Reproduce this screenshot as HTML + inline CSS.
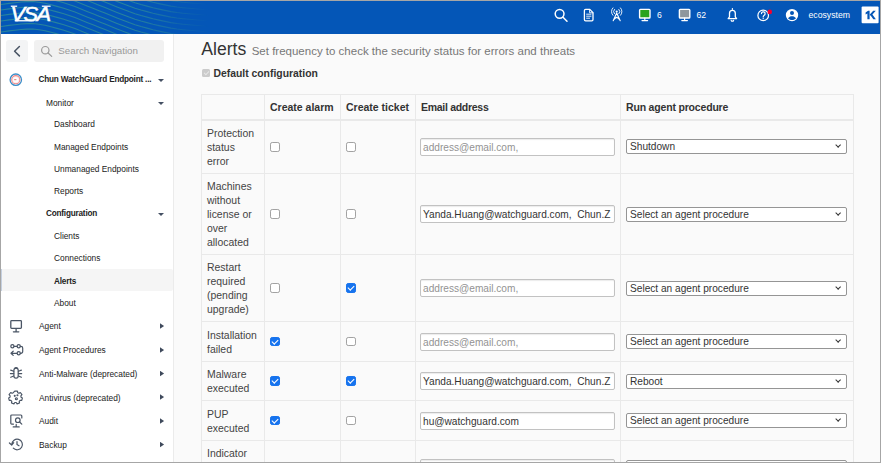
<!DOCTYPE html>
<html>
<head>
<meta charset="utf-8">
<title>VSA - Alerts</title>
<style>
*{box-sizing:border-box;}
html,body{margin:0;padding:0;}
body{width:881px;height:464px;overflow:hidden;position:relative;background:#fafafa;font-family:"Liberation Sans",sans-serif;color:#333;}
#frame{position:absolute;left:0;top:0;width:881px;height:463px;border:1px solid #a6a6a6;z-index:50;pointer-events:none;}
#botw{position:absolute;left:0;top:463px;width:881px;height:1px;background:#fff;z-index:51;}
#hdr{position:absolute;left:1px;top:1px;width:879px;height:33px;background:#0456b7;overflow:hidden;}
#hdr svg.wave{position:absolute;left:0;top:0;}

.hi{position:absolute;top:0;}
.htxt{position:absolute;color:#fff;font-size:8.7px;line-height:10px;top:9px;}
#side{position:absolute;left:1px;top:34px;width:173px;height:429px;background:#fff;border-right:1px solid #ebebeb;}
#back{position:absolute;left:5px;top:6px;width:22px;height:22px;background:#f3f4f5;border-radius:3px;}
#search{position:absolute;left:33px;top:6px;width:130px;height:22px;background:#f1f1f1;border-radius:3px;}
#search span{position:absolute;left:24.3px;top:4.8px;font-size:9.75px;line-height:12px;color:#999;}
.nav{position:absolute;font-size:8.35px;line-height:10px;color:#222;white-space:nowrap;margin-top:0.5px;}
.nav.b{font-weight:700;font-size:8.2px;letter-spacing:-0.2px;}
.caret{position:absolute;width:0;height:0;border-left:3px solid transparent;border-right:3px solid transparent;border-top:3.4px solid #445063;margin-left:0.4px;margin-top:0.6px;}
.rarr{position:absolute;width:4.5px;height:6px;margin-top:-0.2px;background:#3f4a5c;clip-path:polygon(0 0,100% 50%,0 100%);}
#sel{position:absolute;left:0;top:235.200px;width:171.500px;height:22.300px;background:#f5f5f5;border-left:1.500px solid #c5d0e0;border-radius:0 2px 2px 0;}
#main{position:absolute;left:174px;top:34px;width:706px;height:429px;}
h1{position:absolute;left:27.3px;top:3.2px;margin:0;font-size:17.6px;font-weight:400;color:#333;line-height:24px;white-space:nowrap;}
h1 small{font-size:11.5px;color:#777;font-weight:400;margin-left:0.5px;}
#defcfg{position:absolute;left:39.4px;top:34px;font-size:10.4px;font-weight:700;color:#333;line-height:12px;}
#defcb{position:absolute;left:28.3px;top:34.8px;width:7.8px;height:7.8px;background:#cbcbcb;border-radius:1.5px;}
#defcb:after{content:"";position:absolute;left:2.6px;top:0.8px;width:2px;height:4.2px;border:solid #e8e8e8;border-width:0 1.2px 1.2px 0;transform:rotate(45deg);}
table{position:absolute;left:27px;top:60px;border-collapse:collapse;table-layout:fixed;width:652px;font-size:10.6px;line-height:14px;}
td,th{border:1px solid #e9e9e9;padding:0 5px;text-align:left;vertical-align:middle;color:#444;}
th{font-weight:700;color:#333;height:25px;border-bottom:2px solid #e9e9e9;font-size:10.5px;}
td:first-child{font-size:10.45px;position:relative;top:1.3px;}
.cb{display:block;width:9.5px;height:9.5px;border:1.2px solid #a2a2a2;border-radius:2.2px;background:#fff;margin-left:0.4px;}
.cb.on{background:#1673ee;border-color:#1673ee;position:relative;}
.cb.on:after{content:"";position:absolute;left:2.1px;top:0px;width:2.6px;height:5.2px;border:solid #fff;border-width:0 1.7px 1.7px 0;transform:rotate(45deg);}
.inp{display:block;width:195px;height:18px;margin-left:-1px;border:1px solid #c2c2c2;border-radius:2px;background:#fff;font-size:10.15px;line-height:17.5px;padding:0 2px;color:#333;white-space:nowrap;overflow:hidden;box-shadow:inset 0 1px 1px rgba(0,0,0,.08);}
.inp.ph{color:#939393;}
.sel{display:block;position:relative;width:220.5px;height:15px;border:1px solid #959595;border-radius:2px;background:#fff;font-size:10.15px;line-height:14.2px;padding:0 3px;color:#333;white-space:nowrap;overflow:hidden;}
.sel:after{content:"";position:absolute;right:5px;top:3.2px;width:3.3px;height:3.3px;border:solid #333;border-width:0 1.3px 1.3px 0;transform:rotate(45deg);}
</style>
</head>
<body>
<div id="hdr">
<svg class="wave" width="260" height="33" viewBox="0 0 260 33"><defs><linearGradient id="wf" x1="0" x2="1" y1="0" y2="0"><stop offset="0" stop-color="#fff" stop-opacity="1"/><stop offset="0.5" stop-color="#fff" stop-opacity="0.95"/><stop offset="0.8" stop-color="#fff" stop-opacity="0"/></linearGradient><mask id="wm"><rect x="0" y="0" width="260" height="33" fill="url(#wf)"/></mask></defs><g mask="url(#wm)" fill="none" stroke="#2f8c98" stroke-width="1.1" stroke-linejoin="round" opacity="0.85"><path d="M164,-7.1 L170,-5.9 L176,-5.0 L182,-4.3 L188,-3.7 L194,-3.2 L200,-2.7 L206,-2.3 L212,-2.1 L218,-1.9 L224,-1.8 L230,-1.7 L236,-1.7"/><path d="M140,-7.5 L146,-5.9 L152,-4.3 L158,-2.9 L164,-1.6 L170,-0.4 L176,0.5 L182,1.2 L188,1.8 L194,2.3 L200,2.8 L206,3.2 L212,3.4 L218,3.6 L224,3.7 L230,3.8 L236,3.8"/><path d="M128,-5.9 L134,-3.8 L140,-2.0 L146,-0.4 L152,1.2 L158,2.6 L164,3.9 L170,5.1 L176,6.0 L182,6.7 L188,7.3 L194,7.8 L200,8.3 L206,8.7 L212,8.9 L218,9.1 L224,9.2 L230,9.3 L236,9.3"/><path d="M110,-7.6 L116,-5.1 L122,-2.7 L128,-0.4 L134,1.7 L140,3.5 L146,5.1 L152,6.7 L158,8.1 L164,9.4 L170,10.6 L176,11.5 L182,12.2 L188,12.8 L194,13.3 L200,13.8 L206,14.2 L212,14.4 L218,14.6 L224,14.7 L230,14.8 L236,14.8"/><path d="M98,-6.8 L104,-4.5 L110,-2.1 L116,0.4 L122,2.8 L128,5.1 L134,7.2 L140,9.0 L146,10.6 L152,12.2 L158,13.6 L164,14.9 L170,16.1 L176,17.0 L182,17.7 L188,18.3 L194,18.8 L200,19.3 L206,19.7 L212,19.9 L218,20.1 L224,20.2 L230,20.3 L236,20.3"/><path d="M86,-6.1 L92,-3.7 L98,-1.3 L104,1.0 L110,3.4 L116,5.9 L122,8.3 L128,10.6 L134,12.7 L140,14.5 L146,16.1 L152,17.7 L158,19.1 L164,20.4 L170,21.6 L176,22.5 L182,23.2 L188,23.8 L194,24.3 L200,24.8 L206,25.2 L212,25.4 L218,25.6 L224,25.7 L230,25.8 L236,25.8"/><path d="M68,-7.6 L74,-5.4 L80,-3.1 L86,-0.6 L92,1.8 L98,4.2 L104,6.5 L110,8.9 L116,11.4 L122,13.8 L128,16.1 L134,18.2 L140,20.0 L146,21.6 L152,23.2 L158,24.6 L164,25.9 L170,27.1 L176,28.0 L182,28.7 L188,29.3 L194,29.8 L200,30.3 L206,30.7 L212,30.9 L218,31.1 L224,31.2 L230,31.3 L236,31.3"/><path d="M-4,-6.9 L2,-7.8 L50,-7.2 L56,-5.6 L62,-4.0 L68,-2.1 L74,0.1 L80,2.4 L86,4.9 L92,7.3 L98,9.7 L104,12.0 L110,14.4 L116,16.9 L122,19.3 L128,21.6 L134,23.7 L140,25.5 L146,27.1 L152,28.7 L158,30.1 L164,31.4 L170,32.6 L176,33.5 L182,34.2 L188,34.8 L194,35.3 L200,35.8 L206,36.2 L212,36.4 L218,36.6 L224,36.7 L230,36.8 L236,36.8"/><path d="M-4,-1.4 L2,-2.3 L8,-3.1 L14,-3.8 L20,-4.5 L26,-4.9 L32,-5.0 L38,-4.3 L44,-3.2 L50,-1.7 L56,-0.1 L62,1.5 L68,3.4 L74,5.6 L80,7.9 L86,10.4 L92,12.8 L98,15.2 L104,17.5 L110,19.9 L116,22.4 L122,24.8 L128,27.1 L134,29.2 L140,31.0 L146,32.6 L152,34.2 L158,35.6 L164,36.9 L170,38.1 L176,39.0 L182,39.7 L188,40.3 L194,40.8 L200,41.3 L206,41.7 L212,41.9"/><path d="M-4,4.1 L2,3.2 L8,2.4 L14,1.7 L20,1.0 L26,0.6 L32,0.5 L38,1.2 L44,2.3 L50,3.8 L56,5.4 L62,7.0 L68,8.9 L74,11.1 L80,13.4 L86,15.9 L92,18.3 L98,20.7 L104,23.0 L110,25.4 L116,27.9 L122,30.3 L128,32.6 L134,34.7 L140,36.5 L146,38.1 L152,39.7 L158,41.1"/><path d="M-4,9.6 L2,8.7 L8,7.9 L14,7.2 L20,6.5 L26,6.1 L32,6.0 L38,6.7 L44,7.8 L50,9.3 L56,10.9 L62,12.5 L68,14.4 L74,16.6 L80,18.9 L86,21.4 L92,23.8 L98,26.2 L104,28.5 L110,30.9 L116,33.4 L122,35.8 L128,38.1 L134,40.2"/><path d="M-4,15.1 L2,14.2 L8,13.4 L14,12.7 L20,12.0 L26,11.6 L32,11.5 L38,12.2 L44,13.3 L50,14.8 L56,16.4 L62,18.0 L68,19.9 L74,22.1 L80,24.4 L86,26.9 L92,29.3 L98,31.7 L104,34.0 L110,36.4 L116,38.9 L122,41.3"/><path d="M-4,20.6 L2,19.7 L8,18.9 L14,18.2 L20,17.5 L26,17.1 L32,17.0 L38,17.7 L44,18.8 L50,20.3 L56,21.9 L62,23.5 L68,25.4 L74,27.6 L80,29.9 L86,32.4 L92,34.8 L98,37.2 L104,39.5 L110,41.9"/><path d="M-4,26.1 L2,25.2 L8,24.4 L14,23.7 L20,23.0 L26,22.6 L32,22.5 L38,23.2 L44,24.3 L50,25.8 L56,27.4 L62,29.0 L68,30.9 L74,33.1 L80,35.4 L86,37.9 L92,40.3"/><path d="M-4,31.6 L2,30.7 L8,29.9 L14,29.2 L20,28.5 L26,28.1 L32,28.0 L38,28.7 L44,29.8 L50,31.3 L56,32.9 L62,34.5 L68,36.4 L74,38.6 L80,40.9"/></g></svg>
<svg id="logo" width="60" height="26" viewBox="0 0 60 26" style="position:absolute;left:0;top:0"><g fill="#fff" stroke="#fff" stroke-width="0.5"><text x="9.5" y="20.2" font-family="Liberation Sans, sans-serif" font-style="italic" font-size="20.5" textLength="39" lengthAdjust="spacingAndGlyphs" letter-spacing="-1.5">VSA</text><rect x="10" y="4.900" width="6" height="0.800"/><rect x="41" y="4.900" width="8.500" height="0.800"/><rect x="14" y="19.300" width="19" height="0.800"/></g></svg>
<svg id="hicons" width="879" height="33" viewBox="1 1 879 33" style="position:absolute;left:0;top:0">
<g fill="none" stroke="#fff" stroke-width="1.5" stroke-linecap="round" stroke-linejoin="round">
<circle cx="559.6" cy="13.8" r="4.4"/><path d="M563,17.2 L567,21.2"/>
<path d="M585.6,9.4 h4.2 l3.2,3.2 v7 a1.2,1.2 0 0 1 -1.2,1.2 h-6.2 a1.2,1.2 0 0 1 -1.2,-1.2 v-9 a1.2,1.2 0 0 1 1.200,-1.2 z" stroke-width="1.3"/>
<path d="M586.6,14.2 h4.4 M586.6,16.2 h4.4 M586.6,18.2 h3" stroke-width="0.9"/>
<path d="M589.6,9.6 v3.2 h3.2" stroke-width="0.9"/>
</g>
<g fill="none" stroke="#fff" stroke-width="1.1" stroke-linecap="round" stroke-linejoin="round">
<path d="M616.7,13 L613.2,20.8 M616.7,13 L620.2,20.8 M614.6,17.8 h4.2 M613.8,19.6 l2.9,-2.4 l2.9,2.4"/>
<circle cx="616.7" cy="11.6" r="1.1" fill="#fff" stroke="none"/>
<path d="M614.5,9.4 a3.1,3.1 0 0 0 0,4.4 M618.9,9.4 a3.1,3.1 0 0 1 0,4.4 M612.9,7.9 a5.3,5.3 0 0 0 0,7.4 M620.5,7.900 a5.3,5.3 0 0 1 0,7.4" stroke-width="0.9"/>
</g>
<g stroke="#fff" stroke-width="1.4" stroke-linejoin="round" stroke-linecap="round">
<rect x="639.6" y="9.4" width="10.4" height="8.6" rx="0.8" fill="#2aa31f"/>
<path d="M644.8,18.2 v2.2 M642,20.6 h5.6" fill="none" stroke-width="1.2"/>
<rect x="679.4" y="9.4" width="10.4" height="8.6" rx="0.8" fill="#8f979d"/>
<path d="M684.6,18.2 v2.2 M681.8,20.6 h5.6" fill="none" stroke-width="1.2"/>
</g>
<g fill="none" stroke="#fff" stroke-width="1.3" stroke-linecap="round" stroke-linejoin="round">
<path d="M728.2,18.6 h8.400 l-1.3,-1.8 v-3.600 a2.9,2.9 0 0 0 -5.8,0 v3.600 z"/>
<path d="M732.4,9.300 v-0.700 M731.2,20.400 a1.3,1.300 0 0 0 2.400,0" stroke-width="1.2"/>
<circle cx="763.2" cy="15.400" r="5.300" stroke-width="1.200"/>
<path d="M761.500,13.600 a1.800,1.800 0 1 1 2.700,1.600 c-0.700,0.400 -1,0.800 -1,1.700" stroke-width="1.200"/>
<circle cx="763.200" cy="18.600" r="0.700" fill="#fff" stroke="none"/>
</g>
<circle cx="769.8" cy="11.900" r="2.300" fill="#f5002f"/>
<circle cx="792" cy="15.100" r="6.200" fill="#fff"/>
<circle cx="792" cy="12.900" r="2" fill="#0456b7"/>
<path d="M788,18.300 c0.900,-1.500 2.500,-2.100 4,-2.100 s3.100,0.600 4,2.100 c-1,1.200 -2.400,1.800 -4,1.800 s-3,-0.600 -4,-1.800 z" fill="#0456b7"/>
<rect x="861.6" y="6.600" width="17" height="16.600" rx="1" fill="#fff"/>
<g fill="#0456b7"><path d="M865.600,12.400 l2.500,-1.600 h1.500 v8.400 h-2.200 v-5.800 l-1.800,1 z"/><path d="M869.600,14.800 l3.600,-4 h2.600 l-3.400,3.800 l3.500,4.600 h-2.600 l-2.300,-3.200 z"/></g>
</svg>
<div class="htxt" style="left:656px;">6</div>
<div class="htxt" style="left:695.500px;">62</div>
<div class="htxt" style="left:807.500px;">ecosystem</div>
</div>
<div id="side">
<div id="back"></div>
<svg id="sicons" width="172" height="429" viewBox="1 34 172 429" style="position:absolute;left:0;top:0;z-index:5">
<g fill="none" stroke="#4a5565" stroke-width="1.300" stroke-linecap="round" stroke-linejoin="round">
<path d="M19.400,46.500 L14.600,51.200 L19.400,55.900" stroke-width="1.500"/>
<g stroke="#9a9a9a" stroke-width="1.200"><circle cx="45.300" cy="50.200" r="3.700"/><path d="M48.100,53 L51.700,56.400"/></g>
<!-- agent monitor -->
<rect x="10.800" y="320.600" width="10.600" height="7.800" rx="0.800"/><path d="M16.100,328.600 v2.800 M13.400,331.800 h5.400"/>
<!-- agent procedures -->
<g stroke-width="1.200"><circle cx="12.400" cy="346.300" r="1.600"/><circle cx="18.700" cy="346.300" r="1.600"/><path d="M14,346.300 h3.100 M20.300,346.300 h0.600 a1.800,1.800 0 0 1 1.800,1.800 v3.400 a1.800,1.800 0 0 1 -1.800,1.800 h-0.600 M17.100,353.300 h-5.900 M13.200,351.200 l-2.200,2.100 l2.200,2.100"/><circle cx="18.700" cy="353.300" r="1.600"/></g>
<!-- bug -->
<g stroke-width="1.200"><rect x="13.900" y="368.200" width="4.300" height="10" rx="2.100"/><path d="M14.700,368.400 a1.600,1.600 0 0 1 2.800,0" /><path d="M13.700,371.300 l-3,-1.200 M13.700,373.600 h-3.300 M13.700,376 l-3,1.200 M18.400,371.300 l3,-1.200 M18.400,373.600 h3.300 M18.400,376 l3,1.200"/></g>
<!-- virus gear -->
<g stroke-width="1.300" transform="translate(16.100 397.100) scale(0.900) translate(-16.300 -397.600)"><path d="M14.800,391 h3 l0.300,1.700 l1.400,0.700 l1.500,-0.900 l1.800,2.400 l-1.200,1.300 l0.200,1.500 l1.500,0.800 l-0.700,2.700 l-1.800,0 l-1,1.200 l0.300,1.700 l-2.700,1 l-1,-1.500 h-1.500 l-1,1.500 l-2.700,-1 l0.300,-1.700 l-1,-1.200 l-1.800,0 l-0.700,-2.700 l1.500,-0.800 l0.200,-1.500 l-1.200,-1.300 l1.800,-2.400 l1.500,0.900 l1.400,-0.700 z"/><circle cx="14.800" cy="396.200" r="0.500"/><circle cx="17.800" cy="395.600" r="0.500"/><circle cx="16.600" cy="399.400" r="1.100"/></g>
<!-- audit -->
<g stroke-width="1.200"><path d="M13.400,424.200 h-1.700 a0.900,0.900 0 0 1 -0.900,-0.900 v-7.400 a0.900,0.900 0 0 1 0.900,-0.900 h9.200 a0.900,0.900 0 0 1 0.900,0.900 v2 M16.200,424.400 v2.200 M13.200,426.900 h6"/><circle cx="17.800" cy="420.200" r="2.300"/><path d="M19.600,422 l2.200,2.200"/></g>
<!-- backup history -->
<g stroke-width="1.200"><path d="M11.800,444.300 a5.300,5.300 0 1 1 1.500,3.900 M9.400,443 l2.300,2 l2,-2.300" /><path d="M17,441.600 v3 l2,1.200"/></g>
</g>
<!-- product circle icon -->
<circle cx="15.800" cy="79.700" r="5.700" fill="#fff" stroke="#3b8ec9" stroke-width="1.300"/>
<circle cx="15.800" cy="79.700" r="4.100" fill="#fdeeee" stroke="#ee8a8a" stroke-width="1.100"/>
<circle cx="15.800" cy="79.700" r="2.500" fill="#fff"/>
<path d="M14.200,79.700 h2.200" stroke="#c55" stroke-width="0.800"/>
</svg>
<div id="search"><span>Search Navigation</span></div>
<div id="sel"></div>
<div class="nav b" style="left:37.500px;top:40.700px;">Chun WatchGuard Endpoint ...</div><div class="caret" style="left:157px;top:44px;"></div>
<div class="nav" style="left:45px;top:63px;">Monitor</div><div class="caret" style="left:157px;top:67px;"></div>
<div class="nav" style="left:53px;top:84.600px;">Dashboard</div>
<div class="nav" style="left:53px;top:107px;">Managed Endpoints</div>
<div class="nav" style="left:53px;top:129.500px;">Unmanaged Endpoints</div>
<div class="nav" style="left:53px;top:151.700px;">Reports</div>
<div class="nav b" style="left:45px;top:174.800px;">Configuration</div><div class="caret" style="left:157px;top:178px;"></div>
<div class="nav" style="left:53px;top:196.200px;">Clients</div>
<div class="nav" style="left:53px;top:218.400px;">Connections</div>
<div class="nav b" style="left:53px;top:242.500px;">Alerts</div>
<div class="nav" style="left:53px;top:263px;">About</div>
<div class="nav" style="left:38px;top:286.300px;">Agent</div><div class="rarr" style="left:158.600px;top:289.300px;"></div>
<div class="nav" style="left:38px;top:310px;">Agent Procedures</div><div class="rarr" style="left:158.600px;top:313.200px;"></div>
<div class="nav" style="left:38px;top:334px;">Anti-Malware (deprecated)</div><div class="rarr" style="left:158.600px;top:336.700px;"></div>
<div class="nav" style="left:38px;top:358px;">Antivirus (deprecated)</div><div class="rarr" style="left:158.600px;top:360.200px;"></div>
<div class="nav" style="left:38px;top:381px;">Audit</div><div class="rarr" style="left:158.600px;top:384.200px;"></div>
<div class="nav" style="left:38px;top:405px;">Backup</div><div class="rarr" style="left:158.600px;top:407.700px;"></div>
</div>
<div id="main">
<h1>Alerts <small>Set frequency to check the security status for errors and threats</small></h1>
<div id="defcb"></div>
<div id="defcfg">Default configuration</div>
<table>
<colgroup><col style="width:63px"><col style="width:76px"><col style="width:75px"><col style="width:205px"><col style="width:233px"></colgroup>
<tr><th></th><th>Create alarm</th><th>Create ticket</th><th style="letter-spacing:-0.29px">Email address</th><th style="letter-spacing:-0.18px">Run agent procedure</th></tr>
<tr style="height:54px"><td>Protection status error</td><td><span class="cb"></span></td><td><span class="cb"></span></td><td><span class="inp ph">address@email.com,</span></td><td><span class="sel">Shutdown</span></td></tr>
<tr style="height:81px"><td>Machines without license or over allocated</td><td><span class="cb"></span></td><td><span class="cb"></span></td><td><span class="inp">Yanda.Huang@watchguard.com,&nbsp; Chun.Z</span></td><td><span class="sel">Select an agent procedure</span></td></tr>
<tr style="height:67px"><td>Restart required (pending upgrade)</td><td><span class="cb"></span></td><td><span class="cb on"></span></td><td><span class="inp ph">address@email.com,</span></td><td><span class="sel">Select an agent procedure</span></td></tr>
<tr style="height:40px"><td>Installation failed</td><td><span class="cb on"></span></td><td><span class="cb"></span></td><td><span class="inp ph">address@email.com,</span></td><td><span class="sel">Select an agent procedure</span></td></tr>
<tr style="height:39px"><td>Malware executed</td><td><span class="cb on"></span></td><td><span class="cb on"></span></td><td><span class="inp">Yanda.Huang@watchguard.com,&nbsp; Chun.Z</span></td><td><span class="sel">Reboot</span></td></tr>
<tr style="height:40px"><td>PUP executed</td><td><span class="cb on"></span></td><td><span class="cb"></span></td><td><span class="inp">hu@watchguard.com</span></td><td><span class="sel">Select an agent procedure</span></td></tr>
<tr style="height:54px"><td style="vertical-align:top;padding-top:5px">Indicator<br>of<br>attack</td><td></td><td></td><td><span class="inp ph">address@email.com,</span></td><td><span class="sel">Select an agent procedure</span></td></tr>
</table>
</div>
<div id="frame"></div><div id="botw"></div>
</body>
</html>
